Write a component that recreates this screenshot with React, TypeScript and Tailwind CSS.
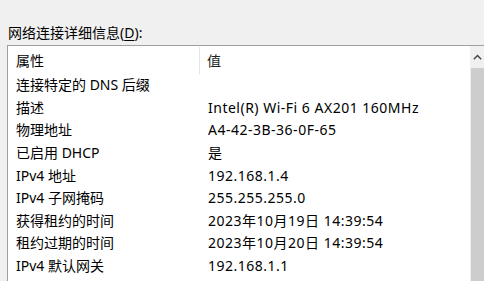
import React from "react";

const rows: [string, string][] = [
  ["连接特定的 DNS 后缀", ""],
  ["描述", "Intel(R) Wi-Fi 6 AX201 160MHz"],
  ["物理地址", "A4-42-3B-36-0F-65"],
  ["已启用 DHCP", "是"],
  ["IPv4 地址", "192.168.1.4"],
  ["IPv4 子网掩码", "255.255.255.0"],
  ["获得租约的时间", "2023年10月19日 14:39:54"],
  ["租约过期的时间", "2023年10月20日 14:39:54"],
  ["IPv4 默认网关", "192.168.1.1"],
];

export default function App() {
  return (
    <div
      className="w-[484px] h-[281px] overflow-hidden bg-[#f0f0f0] text-black text-[14px]"
      style={{ fontFamily: '"Noto Sans", "Noto Sans CJK SC", sans-serif' }}
    >
      <div className="h-[45px] pl-[8px] pt-[23px] leading-[20px]">
        网络连接详细信息(<span className="underline underline-offset-2">D</span>):
      </div>
      <div className="ml-[7px] h-[236px] border-l border-t border-[#a0a0a0] bg-white flex">
        <div className="flex-1 flex flex-col">
          <div className="h-[28px] pt-[1px] flex items-center">
            <div className="w-[192px] h-full pl-[8px] flex items-center border-r border-[#e5e5e5]">属性</div>
            <div className="pl-[7px] text-[#222]">值</div>
          </div>
          {rows.map(([k, v]) => (
            <div key={k} className="h-[22.6px] flex items-center leading-none">
              <div className="w-[193px] pl-[8px] whitespace-nowrap">{k}</div>
              <div className="pl-[7px] whitespace-nowrap tracking-[0.5px]">{v}</div>
            </div>
          ))}
        </div>
        <div className="w-[14px] flex flex-col bg-[#f0f0f0]">
          <div className="h-[22px] flex items-center justify-center">
            <svg width="9" height="6" viewBox="0 0 9 6">
              <path d="M0.8 5.2 L4.5 1.5 L8.2 5.2" fill="none" stroke="#444" strokeWidth="1.4" />
            </svg>
          </div>
          <div className="flex-1 ml-[1px] bg-[#cdcdcd]" />
        </div>
      </div>
    </div>
  );
}
